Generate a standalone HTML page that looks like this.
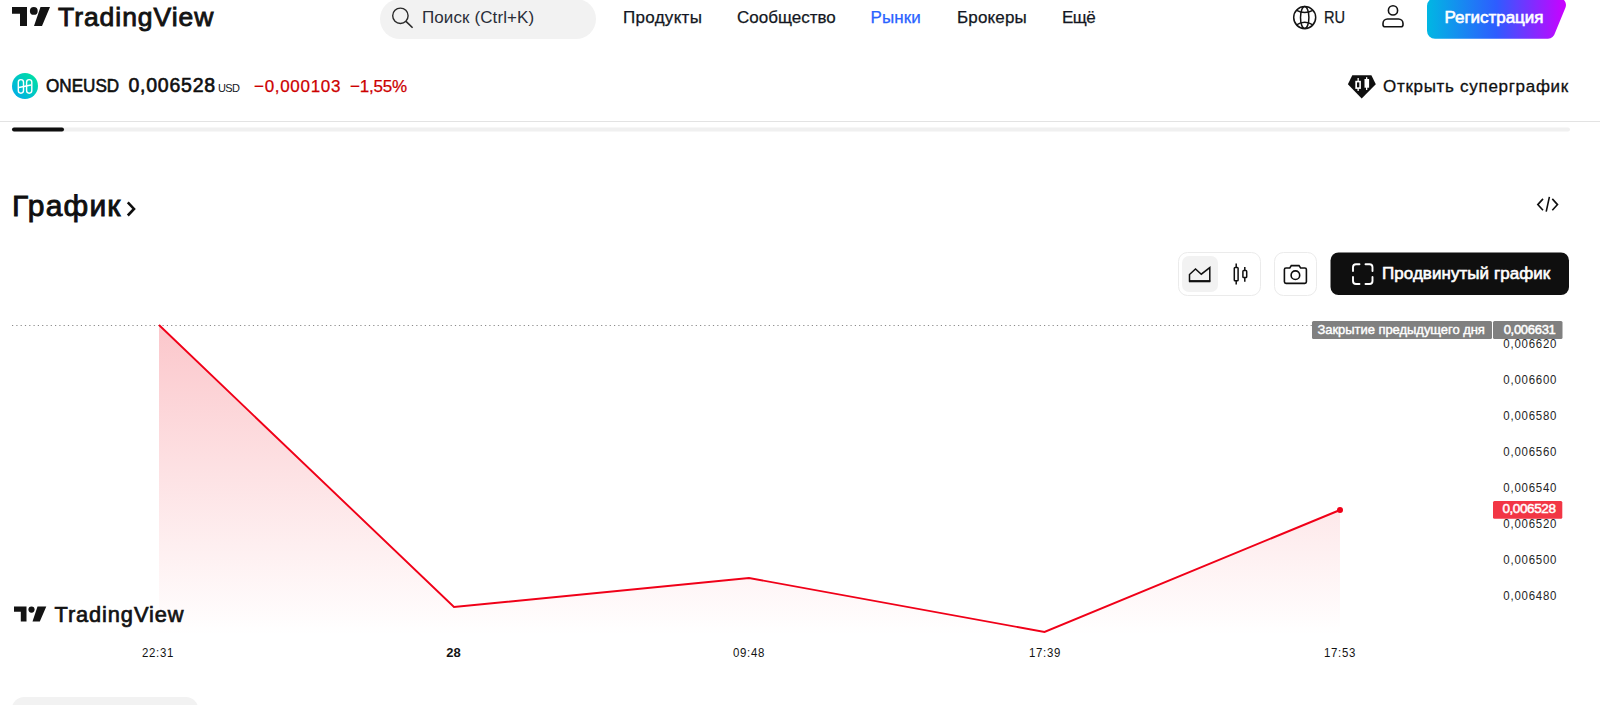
<!DOCTYPE html>
<html><head><meta charset="utf-8"><style>
html,body{margin:0;padding:0;width:1600px;height:705px;overflow:hidden;background:#fff;}
.a{position:absolute;}
.t{position:absolute;white-space:nowrap;}
</style></head><body>
<svg class="a" style="left:0;top:0" width="1600" height="705" viewBox="0 0 1600 705">
<defs>
<linearGradient id="reg" x1="0" y1="0" x2="1" y2="0">
<stop offset="0" stop-color="#00b7e3"/><stop offset="0.5" stop-color="#2e5cff"/><stop offset="1" stop-color="#cc00ff"/>
</linearGradient>
<linearGradient id="coin" x1="1" y1="0" x2="0" y2="1">
<stop offset="0" stop-color="#00e69a"/><stop offset="1" stop-color="#00a8ef"/>
</linearGradient>
<linearGradient id="fill" x1="0" y1="325" x2="0" y2="635" gradientUnits="userSpaceOnUse">
<stop offset="0" stop-color="#f23645" stop-opacity="0.28"/><stop offset="1" stop-color="#f23645" stop-opacity="0.0"/>
</linearGradient>
</defs>
<!-- TV logo -->
<path d="M12 7H27V26H20V13.8H12Z M40.5 7H50L42 26H34Z" fill="#131313"/>
<circle cx="33.8" cy="10.9" r="3.9" fill="#131313"/>
<!-- search pill -->
<rect x="380" y="-1" width="216" height="40" rx="20" fill="#f2f2f2"/>
<circle cx="400.4" cy="15.8" r="7.7" fill="none" stroke="#2a2a2a" stroke-width="1.4"/>
<path d="M406 21.4L412.6 27.8" stroke="#2a2a2a" stroke-width="1.6" stroke-linecap="butt"/>
<!-- globe -->
<g fill="none" stroke="#131313" stroke-width="1.5">
<circle cx="1304.7" cy="17.6" r="11"/>
<ellipse cx="1304.7" cy="17.6" rx="4.2" ry="11"/>
<path d="M1296.6 10.3Q1304.7 14.6 1312.8 10.3 M1296.6 24.9Q1304.7 19.8 1312.8 24.9"/>
</g>
<!-- user -->
<g fill="none" stroke="#131313" stroke-width="1.6">
<circle cx="1393" cy="10.4" r="4.6"/>
<path d="M1387.5 19H1398.5A4.5 4.5 0 0 1 1403 23.5V24.8A2 2 0 0 1 1401 26.8H1385A2 2 0 0 1 1383 24.8V23.5A4.5 4.5 0 0 1 1387.5 19Z"/>
</g>
<!-- register button -->
<path d="M1435 -2H1559A7 7 0 0 1 1565.5 7.5L1555 33A8 8 0 0 1 1548 38.8H1435A8 8 0 0 1 1427 30.8V6A8 8 0 0 1 1435 -2Z" fill="url(#reg)"/>
<!-- coin -->
<circle cx="25" cy="86" r="13" fill="url(#coin)"/>
<g fill="none" stroke="#fff" stroke-width="1.4">
<rect x="18.3" y="79.6" width="5.2" height="13.6" rx="2.6"/>
<rect x="26.6" y="79.6" width="5.2" height="13.6" rx="2.6"/>
<path d="M19 87.5L31 85"/>
</g>
<!-- superchart icon -->
<path d="M1352.3 75.2H1371.4L1375.8 84.3L1361.7 98.6L1347.9 84.3Z" fill="#0f0f0f"/>
<g fill="#fff">
<rect x="1357.5" y="78" width="1.3" height="13"/>
<rect x="1355.3" y="80.8" width="5.6" height="8.1"/>
<rect x="1366" y="77.2" width="1.3" height="12.8"/>
<rect x="1364.5" y="79" width="4.6" height="8.7"/>
</g>
<rect x="1357" y="82.4" width="2.3" height="4.9" fill="#0f0f0f"/>
<!-- separator -->
<rect x="0" y="121" width="1600" height="1" fill="#e3e3e3"/>
<rect x="12" y="127.5" width="1558" height="4" rx="2" fill="#f0f0f0"/>
<rect x="12" y="127.5" width="52" height="4" rx="2" fill="#0f0f0f"/>
<!-- title chevron -->
<path d="M127.8 202.3L134 208.9L127.8 215.5" fill="none" stroke="#0f0f0f" stroke-width="2.6"/>
<!-- code icon -->
<g fill="none" stroke="#0f0f0f" stroke-width="1.6">
<path d="M1543 198.9L1537.8 204.6L1543 210.2 M1552.3 198.9L1557.5 204.6L1552.3 210.2 M1549.4 196.8L1546.2 211.6"/>
</g>
<!-- toolbar -->
<rect x="1178.5" y="252.5" width="82" height="43" rx="9" fill="#fff" stroke="#ebebeb"/>
<rect x="1182" y="256" width="36" height="36" rx="7" fill="#f2f2f2"/>
<path d="M1189.5 281V274.5L1195.5 269L1201.3 274.2L1209.8 267.6V281Z" fill="none" stroke="#0f0f0f" stroke-width="1.5" stroke-linejoin="miter"/>
<path d="M1189 281.3H1210.3" stroke="#0f0f0f" stroke-width="2"/>
<g fill="none" stroke="#0f0f0f" stroke-width="1.5">
<rect x="1234.3" y="267.5" width="3.8" height="13.2" rx="0.8"/>
<rect x="1242.9" y="270.6" width="3.8" height="7" rx="0.8"/>
<path d="M1236.2 263.5V267.5M1236.2 280.7V284.6M1244.8 267V270.6M1244.8 277.6V281.7"/>
</g>
<rect x="1274.5" y="252.5" width="42" height="43" rx="9" fill="#fff" stroke="#ebebeb"/>
<g fill="none" stroke="#0f0f0f" stroke-width="1.6">
<path d="M1286 268H1289.8L1291.3 265.6H1299L1300.6 268H1304.8A1.6 1.6 0 0 1 1306.4 269.6V281.8A1.6 1.6 0 0 1 1304.8 283.4H1286A1.6 1.6 0 0 1 1284.4 281.8V269.6A1.6 1.6 0 0 1 1286 268Z"/>
<circle cx="1295.4" cy="275.2" r="4.3"/>
</g>
<rect x="1330.5" y="252.5" width="238.5" height="42.5" rx="8" fill="#0f0f0f"/>
<g fill="none" stroke="#fff" stroke-width="1.9" stroke-linecap="round">
<path d="M1353 271V267.3A3 3 0 0 1 1356 264.3H1359.5 M1365.5 264.3H1369.5A3 3 0 0 1 1372.5 267.3V271 M1372.5 277V281A3 3 0 0 1 1369.5 284H1365.5 M1359.5 284H1356A3 3 0 0 1 1353 281V277"/>
</g>
<!-- CHART -->
<path d="M12 325.5H1312" stroke="#8a8a8a" stroke-width="1" stroke-dasharray="1.2 3.1"/>
<path d="M159 325L454 607L749 578L1044.5 632L1340 510V635H159Z" fill="url(#fill)"/>
<path d="M159 325L454 607L749 578L1044.5 632L1340 510" fill="none" stroke="#f00018" stroke-width="1.9" stroke-linejoin="miter"/>
<circle cx="1340" cy="510" r="3" fill="#f00018"/>
<!-- watermark logo -->
<path d="M14 606.5H26.5V621.5H20.8V611.8H14Z M37.5 606.5H46.3L39.8 621.5H32.5Z" fill="#131313"/>
<circle cx="31.5" cy="609.6" r="3.1" fill="#131313"/>
<!-- bottom pill -->
<rect x="12" y="697" width="186" height="30" rx="12" fill="#f2f2f2"/>
</svg>
<div class="t" style="left:58.00px;top:3.76px;font:400 26.5px/26.5px 'Liberation Sans', sans-serif;color:#131313;letter-spacing:0.95px;-webkit-text-stroke:0.9px #131313;">TradingView</div>
<div class="t" style="left:422.00px;top:8.51px;font:400 17px/17px 'Liberation Sans', sans-serif;color:#2a2e39;letter-spacing:0.1px;">Поиск (Ctrl+K)</div>
<div class="t" style="left:623.00px;top:8.51px;font:400 17px/17px 'Liberation Sans', sans-serif;color:#131722;letter-spacing:0.3px;-webkit-text-stroke:0.25px #131722;">Продукты</div>
<div class="t" style="left:737.00px;top:8.51px;font:400 17px/17px 'Liberation Sans', sans-serif;color:#131722;letter-spacing:0px;-webkit-text-stroke:0.25px #131722;">Сообщество</div>
<div class="t" style="left:870.50px;top:8.51px;font:400 17px/17px 'Liberation Sans', sans-serif;color:#2962ff;letter-spacing:0.1px;-webkit-text-stroke:0.25px #2962ff;">Рынки</div>
<div class="t" style="left:957.00px;top:8.51px;font:400 17px/17px 'Liberation Sans', sans-serif;color:#131722;letter-spacing:0.15px;-webkit-text-stroke:0.25px #131722;">Брокеры</div>
<div class="t" style="left:1062.00px;top:8.51px;font:400 17px/17px 'Liberation Sans', sans-serif;color:#131722;letter-spacing:-0.5px;-webkit-text-stroke:0.25px #131722;">Ещё</div>
<div class="t" style="left:1324.00px;top:8.61px;font:400 17px/17px 'Liberation Sans', sans-serif;color:#131722;letter-spacing:0px;-webkit-text-stroke:0.25px #131722;transform:scaleX(0.86);transform-origin:0 0;">RU</div>
<div class="t" style="left:1444.50px;top:9.11px;font:400 17px/17px 'Liberation Sans', sans-serif;color:#ffffff;letter-spacing:-0.05px;-webkit-text-stroke:0.6px #ffffff;">Регистрация</div>
<div class="t" style="left:45.70px;top:76.84px;font:400 18.5px/18.5px 'Liberation Sans', sans-serif;color:#0f0f0f;letter-spacing:0px;-webkit-text-stroke:0.6px #0f0f0f;transform:scaleX(0.925);transform-origin:0 0;">ONEUSD</div>
<div class="t" style="left:128.50px;top:75.99px;font:400 19.5px/19.5px 'Liberation Sans', sans-serif;color:#0f0f0f;letter-spacing:0.75px;-webkit-text-stroke:0.6px #0f0f0f;">0,006528</div>
<div class="t" style="left:218.00px;top:83.19px;font:400 11px/11px 'Liberation Sans', sans-serif;color:#131722;letter-spacing:-0.6px;">USD</div>
<div class="t" style="left:254.00px;top:77.71px;font:400 17px/17px 'Liberation Sans', sans-serif;color:#cc0000;letter-spacing:0.7px;-webkit-text-stroke:0.25px #cc0000;">−0,000103</div>
<div class="t" style="left:350.00px;top:77.71px;font:400 17px/17px 'Liberation Sans', sans-serif;color:#cc0000;letter-spacing:-0.2px;-webkit-text-stroke:0.25px #cc0000;">−1,55%</div>
<div class="t" style="left:1383.00px;top:78.01px;font:400 17px/17px 'Liberation Sans', sans-serif;color:#0f0f0f;letter-spacing:0.7px;-webkit-text-stroke:0.3px #0f0f0f;">Открыть суперграфик</div>
<div class="t" style="left:12.00px;top:190.60px;font:400 30px/30px 'Liberation Sans', sans-serif;color:#0f0f0f;letter-spacing:1.2px;-webkit-text-stroke:0.9px #0f0f0f;">График</div>
<div class="t" style="left:1382.00px;top:265.01px;font:400 17px/17px 'Liberation Sans', sans-serif;color:#ffffff;letter-spacing:0.05px;-webkit-text-stroke:0.6px #ffffff;">Продвинутый график</div>
<div class="t" style="right:44.00px;top:336.99px;font:400 13px/13px 'Liberation Sans', sans-serif;color:#262626;letter-spacing:0.87px;transform:scaleX(0.88);transform-origin:100% 0;margin-right:-0.77px;">0,006620</div>
<div class="t" style="right:44.00px;top:372.99px;font:400 13px/13px 'Liberation Sans', sans-serif;color:#262626;letter-spacing:0.87px;transform:scaleX(0.88);transform-origin:100% 0;margin-right:-0.77px;">0,006600</div>
<div class="t" style="right:44.00px;top:408.99px;font:400 13px/13px 'Liberation Sans', sans-serif;color:#262626;letter-spacing:0.87px;transform:scaleX(0.88);transform-origin:100% 0;margin-right:-0.77px;">0,006580</div>
<div class="t" style="right:44.00px;top:444.99px;font:400 13px/13px 'Liberation Sans', sans-serif;color:#262626;letter-spacing:0.87px;transform:scaleX(0.88);transform-origin:100% 0;margin-right:-0.77px;">0,006560</div>
<div class="t" style="right:44.00px;top:480.99px;font:400 13px/13px 'Liberation Sans', sans-serif;color:#262626;letter-spacing:0.87px;transform:scaleX(0.88);transform-origin:100% 0;margin-right:-0.77px;">0,006540</div>
<div class="t" style="right:44.00px;top:516.99px;font:400 13px/13px 'Liberation Sans', sans-serif;color:#262626;letter-spacing:0.87px;transform:scaleX(0.88);transform-origin:100% 0;margin-right:-0.77px;">0,006520</div>
<div class="t" style="right:44.00px;top:552.99px;font:400 13px/13px 'Liberation Sans', sans-serif;color:#262626;letter-spacing:0.87px;transform:scaleX(0.88);transform-origin:100% 0;margin-right:-0.77px;">0,006500</div>
<div class="t" style="right:44.00px;top:588.99px;font:400 13px/13px 'Liberation Sans', sans-serif;color:#262626;letter-spacing:0.87px;transform:scaleX(0.88);transform-origin:100% 0;margin-right:-0.77px;">0,006480</div>
<svg class="a" style="left:0;top:0" width="1600" height="705" viewBox="0 0 1600 705">
<rect x="1312" y="321" width="180" height="18" rx="1.5" fill="#808080"/>
<rect x="1493" y="321" width="69.5" height="18" rx="1.5" fill="#808080"/>
<rect x="1493" y="501" width="69.3" height="17.7" rx="1.5" fill="#f23645"/>
</svg>
<div class="t" style="left:1317.50px;top:323.39px;font:400 13px/13px 'Liberation Sans', sans-serif;color:#ffffff;letter-spacing:-0.05px;-webkit-text-stroke:0.4px #ffffff;">Закрытие предыдущего дня</div>
<div class="t" style="right:44.50px;top:323.49px;font:400 13px/13px 'Liberation Sans', sans-serif;color:#ffffff;letter-spacing:-0.3px;-webkit-text-stroke:0.5px #ffffff;">0,006631</div>
<div class="t" style="right:44.50px;top:502.37px;font:400 13.5px/13.5px 'Liberation Sans', sans-serif;color:#ffffff;letter-spacing:-0.4px;-webkit-text-stroke:0.5px #ffffff;">0,006528</div>
<div class="t" style="left:-42.00px;width:400px;text-align:center;top:646.19px;font:400 13px/13px 'Liberation Sans', sans-serif;color:#131313;letter-spacing:0.75px;transform:scaleX(0.88);">22:31</div>
<div class="t" style="left:253.50px;width:400px;text-align:center;top:646.19px;font:700 13px/13px 'Liberation Sans', sans-serif;color:#131313;letter-spacing:0px;">28</div>
<div class="t" style="left:549.00px;width:400px;text-align:center;top:646.19px;font:400 13px/13px 'Liberation Sans', sans-serif;color:#131313;letter-spacing:0.75px;transform:scaleX(0.88);">09:48</div>
<div class="t" style="left:844.50px;width:400px;text-align:center;top:646.19px;font:400 13px/13px 'Liberation Sans', sans-serif;color:#131313;letter-spacing:0.75px;transform:scaleX(0.88);">17:39</div>
<div class="t" style="left:1140.00px;width:400px;text-align:center;top:646.19px;font:400 13px/13px 'Liberation Sans', sans-serif;color:#131313;letter-spacing:0.75px;transform:scaleX(0.88);">17:53</div>
<div class="t" style="left:54.50px;top:603.74px;font:400 21.8px/21.8px 'Liberation Sans', sans-serif;color:#131313;letter-spacing:0.9px;-webkit-text-stroke:0.7px #131313;">TradingView</div>
</body></html>
